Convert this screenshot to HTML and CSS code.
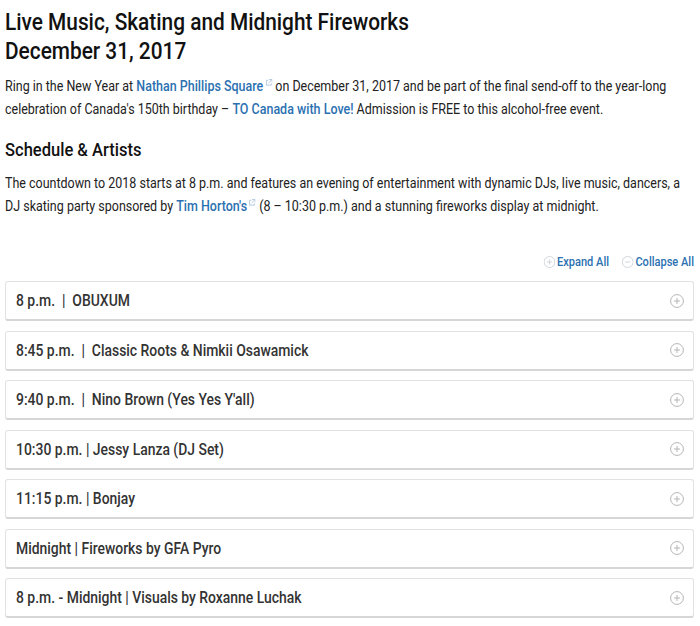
FILE: index.html
```html
<!DOCTYPE html>
<html lang="en">
<head>
<meta charset="utf-8">
<title>Live Music, Skating and Midnight Fireworks</title>
<link rel="stylesheet" href="styles.css">
</head>
<body>
<svg class="defs" width="0" height="0" aria-hidden="true">
  <symbol id="ext" viewBox="0 0 8 8" preserveAspectRatio="none"><path d="M3 1.500H1V7h5.500V5M4 .5h3.500V4M7.300.7 3.500 4.500" fill="none" stroke="currentColor"/></symbol>
  <symbol id="plus" viewBox="0 0 14 14" preserveAspectRatio="none"><circle cx="7" cy="7" r="6.400" fill="none" stroke="currentColor"/><path d="M7 4v6M4 7h6" stroke="currentColor"/></symbol>
  <symbol id="minus" viewBox="0 0 14 14" preserveAspectRatio="none"><circle cx="7" cy="7" r="6.400" fill="none" stroke="currentColor"/><path d="M4 7h6" stroke="currentColor"/></symbol>
</svg>
<main class="page">
  <h1 class="title">Live Music, Skating and Midnight Fireworks<br>December 31, 2017</h1>
  <p class="para">Ring in the New Year at <a class="link" href="#">Nathan Phillips Square<svg class="ext"><use href="#ext"/></svg></a> on December 31, 2017 and be part of the final send-off to the year-long celebration of Canada's 150th birthday – <a class="link" href="#">TO Canada with Love!</a> Admission is FREE to this alcohol-free event.</p>
  <h2 class="subtitle">Schedule &amp; Artists</h2>
  <p class="para">The countdown to 2018 starts at 8 p.m. and features an evening of entertainment with dynamic DJs, live music, dancers, a DJ skating party sponsored by <a class="link" href="#">Tim Horton's<svg class="ext"><use href="#ext"/></svg></a> (8 – 10:30 p.m.) and a stunning fireworks display at midnight.</p>
  <div class="controls">
    <a class="control" href="#"><svg class="control-icon"><use href="#plus"/></svg>Expand All</a>
    <a class="control" href="#"><svg class="control-icon"><use href="#minus"/></svg>Collapse All</a>
  </div>
  <div class="accordion">
    <div class="item"><span class="item-label">8 p.m. &nbsp;|&nbsp; OBUXUM</span><svg class="toggle"><use href="#plus"/></svg></div>
    <div class="item"><span class="item-label">8:45 p.m. &nbsp;|&nbsp; Classic Roots &amp; Nimkii Osawamick</span><svg class="toggle"><use href="#plus"/></svg></div>
    <div class="item"><span class="item-label">9:40 p.m. &nbsp;|&nbsp; Nino Brown (Yes Yes Y'all)</span><svg class="toggle"><use href="#plus"/></svg></div>
    <div class="item"><span class="item-label">10:30 p.m. | Jessy Lanza (DJ Set)</span><svg class="toggle"><use href="#plus"/></svg></div>
    <div class="item"><span class="item-label">11:15 p.m. | Bonjay</span><svg class="toggle"><use href="#plus"/></svg></div>
    <div class="item"><span class="item-label">Midnight | Fireworks by GFA Pyro</span><svg class="toggle"><use href="#plus"/></svg></div>
    <div class="item"><span class="item-label">8 p.m. - Midnight | Visuals by Roxanne Luchak</span><svg class="toggle"><use href="#plus"/></svg></div>
  </div>
</main>
</body>
</html>
```
FILE: styles.css
```css
* { box-sizing: border-box; }
html, body { margin: 0; background: #fff; }
body { font-family: Roboto, "Liberation Sans", sans-serif; color: #222; overflow: hidden; }
.defs { position: absolute; }
.page { padding: 8px 6px 0 5px; }
.title { width: calc(100% / 0.868); margin: 0; font-size: 24px; line-height: 29px; font-weight: 500; color: #111; transform: scaleX(0.868); transform-origin: left top; }
.para { width: calc(100% / 0.892); margin: 9px 0 0; font-size: 14px; line-height: 22.500px; color: #222; transform: scaleX(0.892); transform-origin: left top; }
.subtitle { width: calc(100% / 0.87); margin: 18px 0 0; font-size: 19px; line-height: 24px; font-weight: 500; color: #111; transform: scaleX(0.87); transform-origin: left top; }
.subtitle + .para { margin-top: 10px; }
.link { color: #2b71b1; font-weight: 500; text-decoration: none; }
.ext { width: 8px; height: 7px; margin-left: 2px; vertical-align: 5px; color: #a9c4dd; }
.controls { display: flex; justify-content: flex-end; gap: 15px; margin-top: 37px; font-size: 13px; line-height: 16px; transform: scaleX(0.85); transform-origin: right center; }
.control { display: flex; align-items: center; gap: 2px; color: #2b71b1; font-weight: 500; text-decoration: none; }
.control-icon { width: 14px; height: 12px; color: #c9d0d6; }
.accordion { display: flex; flex-direction: column; gap: 9.500px; margin-top: 11px; }
.item { display: flex; justify-content: space-between; align-items: center; height: 40px; padding: 0 10px; background: #fff; border: 1px solid #e2e2e2; border-bottom: 2px solid #d6d6d6; border-radius: 3px; }
.item-label { font-size: 16px; font-weight: 500; color: #333; white-space: nowrap; transform: scaleX(0.87); transform-origin: left center; }
.toggle { width: 14px; height: 14px; margin-right: -1px; color: #b5b5b5; flex: none; }
```
